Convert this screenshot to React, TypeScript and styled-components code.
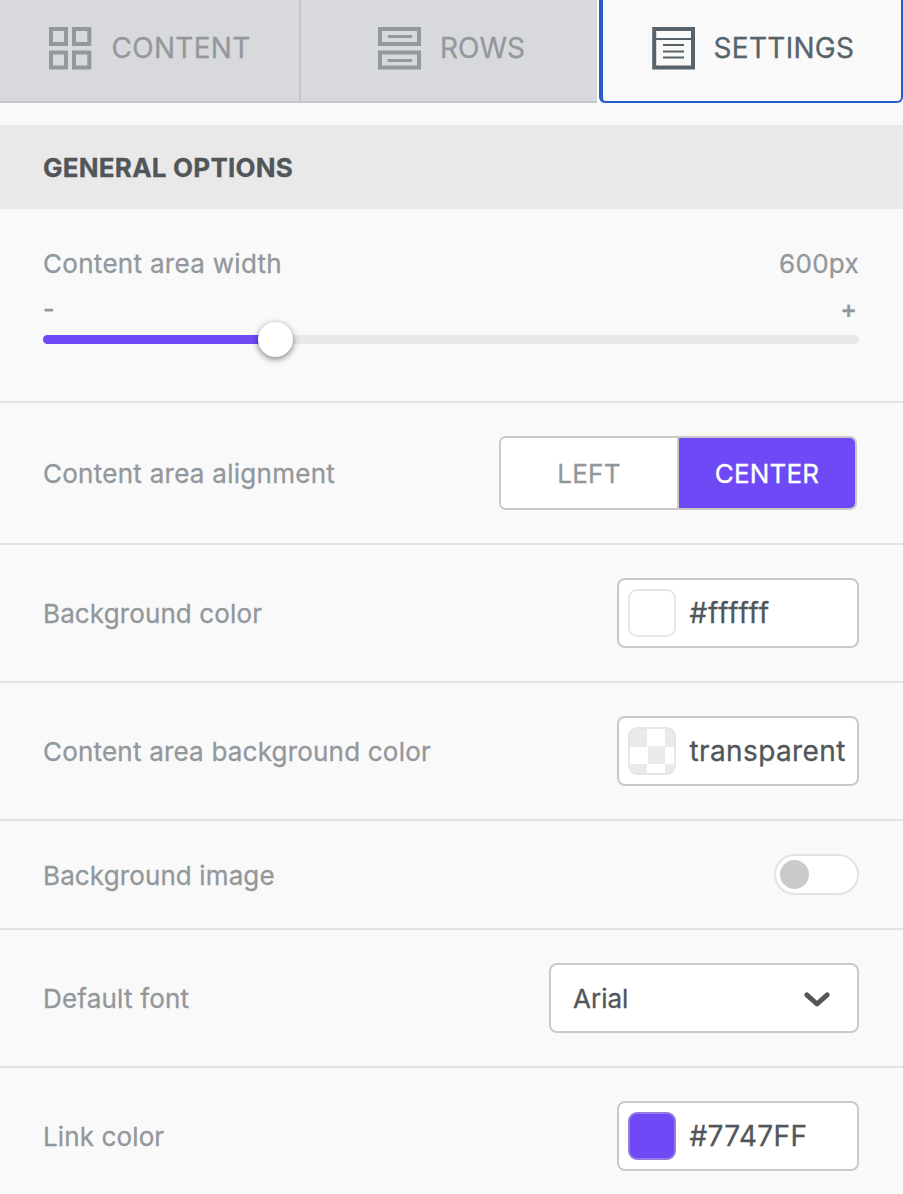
import React from "react";
import styled, { createGlobalStyle } from "styled-components";

const c = {
  page: "#f9f9f9",
  accent: "#6f49f6",
  muted: "#92979b",
  dark: "#505659",
  tabBg: "#d8d9dd",
  tabInk: "#94989b",
  slate: "#56636a",
  border: "#c9c9c9",
  divider: "#e2e2e6",
  focus: "#265cc8",
};

const GlobalStyle = createGlobalStyle`
  *, *::before, *::after { box-sizing: border-box; }
  html, body { margin: 0; background: ${c.page}; }
  body { font-family: Inter, "Liberation Sans", sans-serif; -webkit-text-stroke: 0.3px currentColor; }
  button { font: inherit; margin: 0; padding: 0; cursor: pointer; }
`;

const Panel = styled.main`
  width: 903px;
  height: 1194px;
  overflow: hidden;
  background: ${c.page};
`;

const Tabs = styled.nav`
  display: flex;
  height: 103px;
`;

const Tab = styled.button<{ $width: number; $divided?: boolean }>`
  display: flex;
  align-items: center;
  justify-content: flex-start;
  width: ${(p) => p.$width}px;
  border: 0 solid #c5c6c8;
  border-bottom-width: 2px;
  border-right-width: ${(p) => (p.$divided ? 2 : 0)}px;
  background: ${c.tabBg};
  color: ${c.tabInk};
`;

const ActiveTab = styled(Tab)`
  margin-left: 2px;
  border: solid ${c.focus};
  border-width: 0 2px 2px 4px;
  border-radius: 0 0 6px 6px;
  background: ${c.page};
  color: ${c.slate};
  box-shadow: 0 0 0 2px #fff;
  clip-path: inset(0 0 0 -2px);
`;

const TabIcon = styled.svg<{ $left: number; $gap: number }>`
  display: block;
  flex: none;
  width: 44px;
  height: 44px;
  margin: -5px ${(p) => p.$gap}px 0 ${(p) => p.$left}px;
`;

const TabLabel = styled.span<{ $spacing?: number }>`
  margin-top: -6px;
  font-size: 28px;
  line-height: 36px;
  letter-spacing: ${(p) => p.$spacing ?? 0}px;
  white-space: nowrap;
`;

const SectionTitle = styled.h2`
  display: flex;
  align-items: center;
  height: 84px;
  margin: 22px 0 0;
  padding: 1px 43px 0;
  background: #e9e9e9;
  color: ${c.dark};
  font-size: 26px;
  font-weight: 700;
  letter-spacing: 0.23px;
`;

const Row = styled.div<{ $height: number }>`
  display: flex;
  align-items: center;
  justify-content: space-between;
  height: ${(p) => p.$height}px;
  padding: 0 44px 0 43px;
  border-bottom: 2px solid ${c.divider};
`;

const WidthRow = styled(Row)`
  flex-direction: column;
  align-items: stretch;
  justify-content: flex-start;
  padding-top: 36px;
`;

const Label = styled.span<{ $spacing?: number }>`
  margin-top: 2px;
  color: ${c.muted};
  font-size: 26px;
  line-height: 34px;
  letter-spacing: ${(p) => p.$spacing ?? 0.12}px;
  white-space: nowrap;
`;

const Line = styled.div`
  display: flex;
  justify-content: space-between;
`;

const Steps = styled(Line)`
  margin-top: 17px;
  padding-right: 2px;
  height: 23px;
  color: ${c.muted};
  font-size: 25px;
  font-weight: 500;
  line-height: 22px;
`;

const Track = styled.div`
  display: flex;
  align-items: center;
  height: 9px;
  margin-top: 14px;
  border-radius: 5px;
  background: #e8e8e8;
`;

const Fill = styled.div`
  height: 9px;
  border-radius: 5px 0 0 5px;
  background: ${c.accent};
`;

const Thumb = styled.div`
  flex: none;
  width: 35px;
  height: 35px;
  margin-left: -17.500px;
  border-radius: 50%;
  background: #fff;
  box-shadow: 0 2px 6px rgba(0, 0, 0, 0.5);
`;

const Segments = styled.div`
  display: flex;
  width: 358px;
  height: 74px;
  margin-right: 2px;
  border: 2px solid ${c.border};
  border-radius: 7px;
  overflow: hidden;
  background: #fff;
`;

const Segment = styled.button<{ $active?: boolean }>`
  flex: 1;
  border: 0;
  border-right: ${(p) => (p.$active ? "0" : `2px solid ${c.border}`)};
  background: ${(p) => (p.$active ? c.accent : "#fff")};
  color: ${(p) => (p.$active ? "#fff" : c.muted)};
  font-size: 26px;
  letter-spacing: 0.2px;
`;

const Field = styled.div<{ $width: number }>`
  display: flex;
  align-items: center;
  width: ${(p) => p.$width}px;
  height: 70px;
  border: 2px solid ${c.border};
  border-radius: 8px;
  background: #fff;
  color: ${c.dark};
`;

const Swatch = styled.span<{ $fill: string }>`
  flex: none;
  width: 48px;
  height: 48px;
  margin: 0 13.500px 0 9px;
  border: 2px solid ${(p) => (p.$fill === c.accent ? "#967cdf" : "#e6e6e6")};
  border-radius: 9px;
  background: ${(p) => p.$fill};
`;

const Value = styled.span<{ $spacing?: number }>`
  font-size: 28px;
  line-height: 36px;
  letter-spacing: ${(p) => p.$spacing ?? 0}px;
  white-space: nowrap;
`;

const SelectField = styled(Field)`
  justify-content: space-between;
  padding: 0 26px 0 22px;
  font-size: 26px;
`;

const Chevron = styled.svg`
  display: block;
  margin-top: 2px;
`;

const Toggle = styled.div`
  display: flex;
  align-items: center;
  width: 85px;
  height: 41px;
  padding-left: 4px;
  border: 2px solid #e2e2e7;
  border-radius: 21px;
  background: #fff;
`;

const Knob = styled.span`
  width: 29px;
  height: 29px;
  border-radius: 50%;
  background: #cacaca;
`;

const CHECKER =
  "repeating-conic-gradient(#fff 0 25%, #eaeaea 0 50%) 0 0 / 35px 35px";

function ColorField({ fill, value, spacing }: { fill: string; value: string; spacing?: number }) {
  return (
    <Field $width={242}>
      <Swatch $fill={fill} />
      <Value $spacing={spacing}>{value}</Value>
    </Field>
  );
}

export default function App() {
  const sliderPercent = 28.55;
  return (
    <>
      <GlobalStyle />
      <Panel>
        <Tabs>
          <Tab $width={301} $divided>
            <TabIcon $left={48} $gap={19.5} viewBox="0 0 44 44" fill="none" stroke="currentColor" strokeWidth="4">
              <rect x="3" y="3" width="15" height="15" />
              <rect x="26" y="3" width="15.300" height="15" />
              <rect x="3" y="26.5" width="15" height="15" />
              <rect x="26" y="26.5" width="15.300" height="15" />
            </TabIcon>
            <TabLabel $spacing={0.3}>CONTENT</TabLabel>
          </Tab>
          <Tab $width={296}>
            <TabIcon $left={76} $gap={19} viewBox="0 0 44 44" fill="none" stroke="currentColor" strokeWidth="4">
              <rect x="3" y="3" width="39" height="15" />
              <rect x="3" y="26.5" width="39" height="15" />
              <path d="M11 10.5h24M10.500 34.500h24.500" strokeWidth="3" />
            </TabIcon>
            <TabLabel>ROWS</TabLabel>
          </Tab>
          <ActiveTab $width={304}>
            <TabIcon $left={49} $gap={17.5} viewBox="0 0 44 44" fill="none" stroke="currentColor" strokeWidth="4">
              <rect x="2.200" y="3" width="38.800" height="38.500" />
              <path d="M2 13h39M11 19h21M11 25.500h21M11 31.500h21" strokeWidth="2" />
            </TabIcon>
            <TabLabel $spacing={0.3}>SETTINGS</TabLabel>
          </ActiveTab>
        </Tabs>
        <SectionTitle>GENERAL OPTIONS</SectionTitle>
        <WidthRow $height={194}>
          <Line>
            <Label $spacing={0.3}>Content area width</Label>
            <Label $spacing={0.3}>600px</Label>
          </Line>
          <Steps>
            <span>-</span>
            <span>+</span>
          </Steps>
          <Track>
            <Fill style={{ width: `${sliderPercent}%` }} />
            <Thumb />
          </Track>
        </WidthRow>
        <Row $height={142}>
          <Label $spacing={0.27}>Content area alignment</Label>
          <Segments>
            <Segment>LEFT</Segment>
            <Segment $active>CENTER</Segment>
          </Segments>
        </Row>
        <Row $height={138}>
          <Label>Background color</Label>
          <ColorField fill="#fff" value="#ffffff" spacing={0.85} />
        </Row>
        <Row $height={138}>
          <Label $spacing={0.2}>Content area background color</Label>
          <ColorField fill={CHECKER} value="transparent" spacing={0.38} />
        </Row>
        <Row $height={109}>
          <Label>Background image</Label>
          <Toggle>
            <Knob />
          </Toggle>
        </Row>
        <Row $height={138}>
          <Label $spacing={0.2}>Default font</Label>
          <SelectField $width={310}>
            <span>Arial</span>
            <Chevron width="28" height="18" viewBox="0 0 28 18" fill="none" stroke="currentColor" strokeWidth="5" strokeLinecap="round" strokeLinejoin="round">
              <path d="M3.800 4.800L14 14L24.200 4.800" />
            </Chevron>
          </SelectField>
        </Row>
        <Row $height={138}>
          <Label>Link color</Label>
          <ColorField fill={c.accent} value="#7747FF" spacing={0.35} />
        </Row>
      </Panel>
    </>
  );
}
